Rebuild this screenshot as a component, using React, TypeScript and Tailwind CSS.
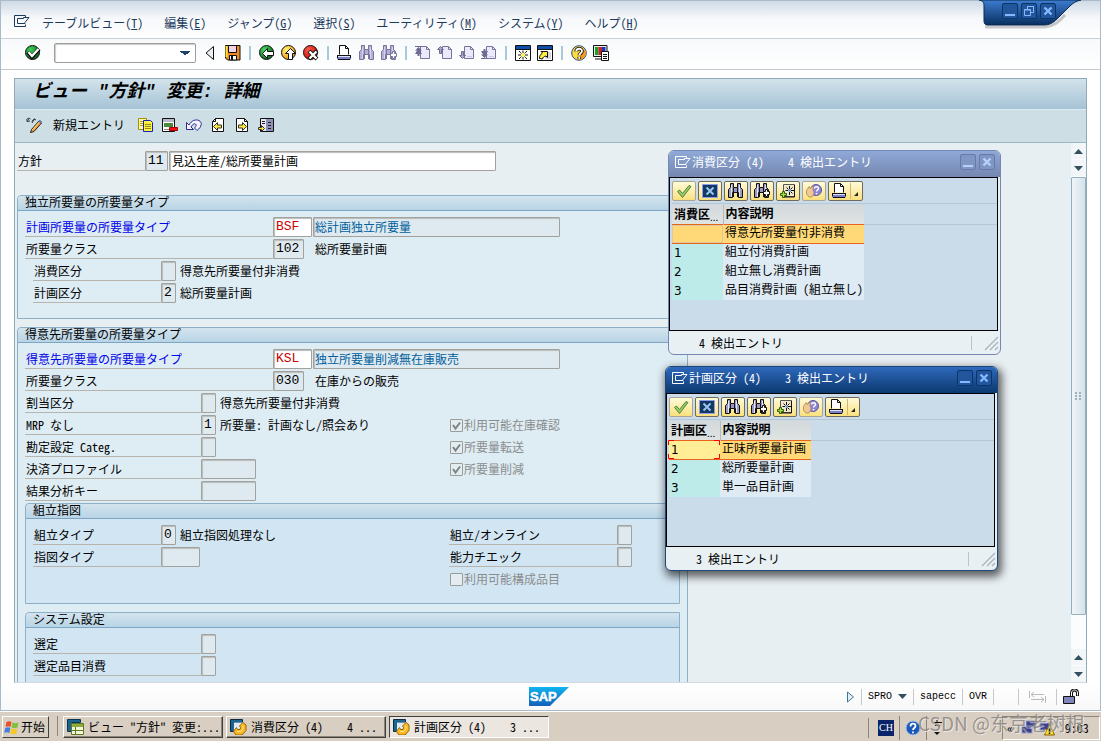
import React from "react";

type Kids = { children?: React.ReactNode };

/* ---------- icons ---------- */

function Icon({ children, w = 16, h = 16 }: Kids & { w?: number; h?: number }) {
  return (
    <svg width={w} height={h} viewBox={`0 0 ${w} ${h}`} fill="none" aria-hidden="true" className="block shrink-0">
      {children}
    </svg>
  );
}

const SessionIcon = () => (
  <Icon w={17} h={13}>
    <path d="M11.5 2.500V.500H.500v11h11v-2" stroke="currentColor" />
    <path d="M3.500 8.500v-5h6v-1h5.500l-4 5v1z" stroke="currentColor" />
  </Icon>
);

const Orb = ({ id, a, b, children }: Kids & { id: string; a: string; b: string }) => (
  <Icon>
    <defs>
      <radialGradient id={id} cx="0.35" cy="0.3" r="0.8">
        <stop offset="0" stopColor={a} />
        <stop offset="1" stopColor={b} />
      </radialGradient>
    </defs>
    <circle cx="7.500" cy="7.500" r="7" fill={`url(#${id})`} stroke="#111" />
    {children}
  </Icon>
);

const OkIcon = () => (
  <Orb id="ok" a="#3fd05a" b="#04581c">
    <path d="M3 7l4 5 7-8" stroke="#111" strokeWidth="4" />
    <path d="M3.500 7l3.500 4 6.500-7" stroke="#fff" strokeWidth="2.200" />
  </Orb>
);
const BackIcon = () => (
  <Orb id="bk" a="#4bd865" b="#04581c">
    <path d="M3.500 8.500l5-5v3h6v4h-6v3z" fill="#fff" stroke="#111" />
  </Orb>
);
const ExitIcon = () => (
  <Orb id="ex" a="#fff27a" b="#f08a00">
    <path d="M9.500 3.500l5 5h-3v6h-4v-6h-3z" fill="#fff" stroke="#111" />
  </Orb>
);
const CancelIcon = () => (
  <Orb id="cn" a="#ff5a4a" b="#c00000">
    <path d="M6 6l8 8M14 6l-8 8" stroke="#111" strokeWidth="4" />
    <path d="M6.500 6.500l7 7M13.500 6.500l-7 7" stroke="#fff" strokeWidth="2.400" />
  </Orb>
);
const HelpIcon = () => (
  <Icon>
    <circle cx="8" cy="8" r="7.300" fill="#ffdc3c" stroke="#2a4a8a" />
    <path d="M8 14.800A6.800 6.800 0 0 0 13.500 4L10 9z" fill="#f79a1c" />
    <path d="M5.200 6.500C5.200 2.800 11 3 11 6c0 2.300-2.700 2.300-2.700 4.300M8.300 11.800v2" stroke="#111" strokeWidth="3.600" />
    <path d="M5.200 6.500C5.200 2.800 11 3 11 6c0 2.300-2.700 2.300-2.700 4.300M8.300 11.800v2" stroke="#fff" strokeWidth="1.800" />
  </Icon>
);
const SaveIcon = () => (
  <Icon>
    <path d="M.5.5h14.500v14.500H2.500l-2-2z" fill="#f08a28" stroke="#111" />
    <path d="M1.500 1v11" stroke="#ffe23c" strokeWidth="2" />
    <path d="M3.500.5h8v7h-8z" fill="#f3d3e6" stroke="#111" />
    <path d="M4.500 10.500h7v4.500h-7z" fill="#fff" stroke="#111" />
    <path d="M6 11h2v4H6z" fill="#111" />
  </Icon>
);
const PrinterIcon = () => (
  <Icon>
    <path d="M2.500 9.500v-9h6l3 3v6" fill="#fff" stroke="#111" />
    <path d="M8.500.5v3h3" stroke="#111" />
    <path d="M.5 10h13v4.500H.5z" fill="#7c80c8" />
    <path d="M.5 10.500v3M13.500 10.500v3M0 10.500h14M1 14.500h12" stroke="#111" />
    <path d="M1 11.500h12" stroke="#dfe0ff" />
  </Icon>
);
const Binoculars = ({ plus, dim }: { plus?: boolean; dim?: boolean }) => {
  const s = dim ? "#77759a" : "#111";
  const f = dim ? "#b3b0d6" : "#9a9ac4";
  return (
    <Icon>
      <path d="M2.500.5h3v4h4v-4h3v4l2 2v8h-4v-5h-6v5h-4v-8l2-2z" fill={f} stroke={s} />
      <path d="M3.500 2v12M11.500 2v12" stroke={dim ? "#d4d2ee" : "#e4e4fa"} />
      <path d="M5.500 5v9M9.500 5v9" stroke={s} />
      {plus && <path d="M9.500 8.500h2v-2h2v2h2v3h-2v2h-2v-2h-2z" fill="#fff" stroke={s} />}
    </Icon>
  );
};
const PageNav = ({ kind }: { kind: "first" | "prev" | "next" | "last" }) => {
  const fromTop = kind === "first" || kind === "prev";
  return (
    <Icon>
      <path d="M5.500 1.500h6l3 3v9h-9z" fill="#ebe9fb" stroke="#77759a" />
      <path d="M11.500 1.500v3h3" stroke="#77759a" />
      {kind === "first" && <path d="M0 1h7v1H0zM3.500 2L7 5.500H5L7 9H4.500v2h-2V9H0l2-3.500H0z" fill="#6d6b92" />}
      {kind === "last" && <path d="M0 14h7v-1H0zM3.500 13L7 9.500H5L7 6H4.500V4h-2v2H0l2 3.500H0z" fill="#6d6b92" />}
      {kind === "prev" && <path d="M3.500 1.500l-3 3h2v4h2v-4h2z" fill="#a9a7cc" stroke="#6d6b92" />}
      {kind === "next" && <path d="M3.500 13.500l-3-3h2v-4h2v4h2z" fill="#a9a7cc" stroke="#6d6b92" />}
      {!fromTop && <path d="M8 11.500h5" stroke="#c9c7e4" />}
    </Icon>
  );
};
const NewSession = () => (
  <Icon>
    <path d="M.5.5h15v15H.5z" fill="#fff" stroke="#111" />
    <path d="M1 1h14v3H1z" fill="#0d4fa8" />
    <path d="M1 4.500h14" stroke="#111" />
    <path d="M6.500 8.500h3v3h-3z" fill="#fff23c" />
    <path d="M8 5.500v2.500M8 12v2.500M3 10h3M10 10h3M4 6l2.500 2.500M12 6L9.500 8.500M4 14l2.500-2.500M12 14l-2.500-2.500" stroke="#111" />
    <path d="M5 7.500l1 1M11 7.500l-1 1M5 12.500l1-1M11 12.500l-1-1" stroke="#e8dc20" />
  </Icon>
);
const Shortcut = () => (
  <Icon>
    <path d="M.5.5h15v15H.5z" fill="#fff" stroke="#111" />
    <path d="M1 1h14v3H1z" fill="#0d4fa8" />
    <path d="M1 4.500h14" stroke="#111" />
    <path d="M8 7h6v7H8z" fill="#d8d8e4" />
    <path d="M2.500 13.500c0-3 1-4 3-5.500L4 6.500h6.500v6L9 11c-2 .5-3 1-3.500 3z" fill="#fff23c" stroke="#111" />
  </Icon>
);
const LayoutIcon = () => (
  <Icon>
    <path d="M.5.5h13.500v11H.5zM2 14h7" fill="#ececec" stroke="#111" />
    <path d="M2 2h3.500v8H2z" fill="#18a030" />
    <path d="M5.500 2H9v8H5.500z" fill="#d02020" />
    <path d="M9 2h3.500v8H9z" fill="#1838c0" />
    <path d="M8.500 6.500h7v9h-7z" fill="#fff" stroke="#111" />
    <path d="M10 9.500h4M10 11.500h4M10 13.500h4" stroke="#111" />
  </Icon>
);

const PencilGlasses = () => (
  <Icon>
    <path d="M.5 3.500C.5 1.500 3 .5 4.500 2M3 1.500L1 4.500l3-.5M6 4.500c.5-2 3-2.500 4-1.500M8.500 1.500L6 6" stroke="#333" />
    <path d="M5.500 12.500l7.500-8.500 2.500 2L8 14.500l-3.500 1z" fill="#f5a040" stroke="#222" />
    <path d="M6.500 12.500l6.500-7" stroke="#ffd890" />
    <path d="M13 3.500l2.500 2" stroke="#5b7ab0" strokeWidth="2" />
  </Icon>
);
const CopyIcon = () => (
  <Icon>
    <path d="M.5 1.500h8v11h-8z" fill="#fff8b0" stroke="#a09000" />
    <path d="M2 4.500h5M2 6.500h5M2 8.500h5" stroke="#b0a000" />
    <path d="M5.500 3.500h7l2 2v9h-9z" fill="#fff23c" stroke="#1720b8" />
    <path d="M7 7.500h6M7 9.500h6M7 11.500h6" stroke="#8f8a20" />
  </Icon>
);
const DeleteRow = () => (
  <Icon>
    <path d="M.5 1.500h12v13H.5z" fill="#fff" stroke="#111" />
    <path d="M1 2h11v3H1z" fill="#b8b8c8" />
    <path d="M2 6h9v4H2z" fill="#4a8a3a" />
    <path d="M2 12.500h5" stroke="#888" />
    <path d="M7.500 10.500h8v3h-8z" fill="#f01010" stroke="#a00" />
  </Icon>
);
const UndoIcon = () => (
  <Icon>
    <path d="M.5 5.500v7h7L5 10c1.500-3 4-4 5-2.500.5 1.500-.5 2.500-1.500 3.500l2.500 2.500c5-4 5.500-8 2-10C9.500 2 5.500 3.500 3 8z" fill="#f4f4ff" stroke="#2c2c90" />
  </Icon>
);
const PageArrow = ({ back }: { back?: boolean }) => (
  <Icon>
    <path d={back ? "M5.500 1.500h8v13h-11v-10z" : "M2.500 1.500h8l3 3v10h-11z"} fill="#fff" stroke="#111" />
    <path d={back ? "M5.500 1.500v3h-3" : "M10.500 1.500v3h3"} stroke="#111" />
    {back ? (
      <path d="M3.500 9.500l4-4v2.500h4v3h-4v2.500z" fill="#ffe83c" stroke="#333" />
    ) : (
      <path d="M12.500 9.500l-4-4v2.500h-4v3h4v2.500z" fill="#ffe83c" stroke="#333" />
    )}
  </Icon>
);
const OtherEntry = () => (
  <Icon>
    <path d="M2.500 1.500h13v13h-13z" fill="#e8e8f4" stroke="#111" />
    <path d="M8 2h7v12H8z" fill="#8f90b8" />
    <path d="M4 4.500h3M4 6.500h3M10 5.500h3M10 8.500h3M10 11.500h3" stroke="#222" />
    <path d="M6.500 11.500l-3-3v2h-3v2h3v2z" fill="#ffe83c" stroke="#333" />
  </Icon>
);

const GreenCheck = () => (
  <Icon>
    <path d="M1.500 8.500l2-1.500 3 3.500L13 2.500l2 1-8.500 11z" fill="#93cf62" stroke="#55803c" />
  </Icon>
);
const BlueX = () => (
  <Icon>
    <path d="M.5 1.500h15v13H.5z" fill="#12395f" stroke="#8f9bf0" />
    <path d="M4.500 4.500l7 7M11.500 4.500l-7 7" stroke="#9cc4f4" strokeWidth="2" />
  </Icon>
);
const Personal = () => (
  <Icon>
    <path d="M3.500 1.500h11v12h-11z" fill="#f0e8c8" stroke="#555" />
    <path d="M14.500 2v12H4" stroke="#111" />
    <path d="M9.500 3v3M9.500 9v3M5.500 7.500H8M11 7.500h3M6.500 4.500L8.500 6.500M12.500 4.500L10.500 6.500M12.500 10.500L10.500 8.500" stroke="#111" />
    <path d="M8.500 6.500h2v2h-2z" fill="#4a8cf0" />
    <path d="M.5 10.500h2v-2h2v2h2v2h-2v2h-2v-2h-2z" fill="#a4e040" stroke="#2f5a10" />
  </Icon>
);
const HandHelp = () => (
  <Icon>
    <circle cx="10" cy="7" r="5.500" fill="#8c84d8" stroke="#5a54a0" />
    <path d="M8.500 5.500c0-2.500 4-2.500 4 0 0 1.500-2 1.500-2 3M10.500 10v1.500" stroke="#fff" strokeWidth="1.500" />
    <path d="M.5 7.500l2.500-4 1 2 3-2.500v4l1 3-2 4H3L.5 11z" fill="#f0c898" stroke="#b08850" strokeWidth=".8" />
  </Icon>
);

const Flag = () => (
  <Icon w={17}>
    <path d="M2.500 3C4.500 2 6 2 7.500 3L6.500 8C5 7 3.500 7 1.500 8z" fill="#e8502c" />
    <path d="M8.500 3.400c2 1 3.500 1 6 0l-1 5c-2 1-4 1-6 0z" fill="#7fc03c" />
    <path d="M1.300 9c2-1 3.500-1 5 0l-1 5c-1.500-1-3-1-5 0z" fill="#3f7fe0" />
    <path d="M7.300 9.400c2 1 4 1 6 0l-1 5c-2 1-4 1-6 0z" fill="#f8c820" />
  </Icon>
);
const TableTask = () => (
  <Icon w={17}>
    <path d="M.5.5h13v3h-9v9h-4z" fill="#1a6490" stroke="#0c3450" />
    <path d="M4.500 4.500h12v11h-12z" fill="#f4f6d8" stroke="#5d7a20" />
    <path d="M5 5h11v3H5z" fill="#8faa3c" />
    <path d="M5 11.500h11M8.500 8v7" stroke="#5d7a20" />
  </Icon>
);
const DialogTask = () => (
  <Icon w={17}>
    <path d="M.5.5h12v3h-8v9h-4z" fill="#1a6490" stroke="#0c2a48" />
    <path d="M4 3.500h9v9H4z" fill="#dfeaf4" />
    <path d="M3.500 12.500l3-4 1 2h2.500l.5-2-1-1.500 3.500-3.500 3 2.500v5.500l-4 4.500h-6z" fill="#f9b820" stroke="#9a6400" />
    <path d="M7 12.500h4l2-3V6.500" stroke="#ffe890" />
  </Icon>
);

/* ---------- shared pieces ---------- */

const fieldBase =
  "h-5 min-w-0 rounded-[1px] border border-[#a3a19c] pb-0.5 shadow-[inset_1px_1px_1px_#b9bcbc] outline-none";

function Field(p: { id?: string; name: string; value?: string; cls: string }) {
  return (
    <input id={p.id} aria-label={p.id ? undefined : p.name} readOnly defaultValue={p.value ?? ""} className={`${fieldBase} ${p.cls}`} />
  );
}

const mono = "font-['Liberation_Mono','Noto_Sans_CJK_JP',monospace] text-[13px]";

function Row(p: {
  id: string;
  label: string;
  labelCls: string;
  fieldCls: string;
  value?: string;
  blue?: boolean;
  children?: React.ReactNode;
}) {
  return (
    <div className="mb-0.5 flex h-5">
      <label
        htmlFor={p.id}
        className={`flex shrink-0 items-center border-b border-[#b7b4ae] pl-px ${p.labelCls} ${p.blue ? "text-[#0000e8]" : ""}`}
      >
        {p.label}
      </label>
      <Field id={p.id} name={p.label} value={p.value} cls={`shrink-0 ${mono} ${p.fieldCls}`} />
      {p.children}
    </div>
  );
}

const Note = ({ children }: Kids) => <span className="self-center pl-1">{children}</span>;

function Check({ label, checked }: { label: string; checked?: boolean }) {
  return (
    <label className="flex h-5 items-center gap-px text-[#8a8d8e]">
      <span className="grid">
        <input
          type="checkbox"
          disabled
          defaultChecked={checked}
          className="col-start-1 row-start-1 size-[13px] appearance-none rounded-[1px] border border-[#9b9b98] bg-[#e3edf1]"
        />
        {checked && (
          <svg viewBox="0 0 13 13" className="col-start-1 row-start-1 size-[13px]" fill="none" aria-hidden="true">
            <path d="M3 6l2.500 3.500L10 3.500" stroke="#7e8486" strokeWidth="2" />
          </svg>
        )}
      </span>
      {label}
    </label>
  );
}

function Group({ title, inner, children }: Kids & { title: string; inner?: boolean }) {
  return (
    <section
      className={`mb-2 min-w-0 rounded-tl-[4px] border border-[#8bb0c8] ${inner ? "bg-[#d2e5f2]" : "bg-[#deecf3]"}`}
    >
      <h2 className="h-[15px] rounded-tl-[4px] border-b border-[#7fa5c4] bg-gradient-to-b from-[#d3e4ee] to-[#b8d4e5] pl-[7px] leading-3">
        {title}
      </h2>
      <div className={`px-[7px] pt-1.5 ${inner ? "pb-3" : ""}`}>{children}</div>
    </section>
  );
}

const Sep = () => <span className="mx-2 h-3.5 w-0.5 shrink-0 bg-[#a9c8da]" />;

function ToolBtn({ name, children }: Kids & { name: string }) {
  return (
    <button type="button" aria-label={name} className="block shrink-0">
      {children}
    </button>
  );
}

/* ---------- dialog ---------- */

type Entry = [string, string];

function WinBtn({ name, active, children }: Kids & { name: string; active?: boolean }) {
  return (
    <button
      type="button"
      aria-label={name}
      className={`grid size-4 place-items-center rounded-[2px] border ${
        active ? "border-[#0b3468] bg-[#22569c] text-[#86b8ff]" : "border-[#677aa6] bg-[#8097c6] text-[#b6d2fb]"
      }`}
    >
      {children}
    </button>
  );
}
const MinGlyph = () => (
  <Icon w={12} h={12}>
    <path d="M1 10h10" stroke="currentColor" strokeWidth="2" />
  </Icon>
);
const CloseGlyph = () => (
  <Icon w={12} h={12}>
    <path d="M2.500 2.500l7 7M9.500 2.500l-7 7" stroke="currentColor" strokeWidth="2.400" />
  </Icon>
);

function DialogBtn({ name, dim, children }: Kids & { name: string; dim?: boolean }) {
  return (
    <button
      type="button"
      aria-label={name}
      className={`flex h-5 items-center justify-center rounded-[2px] border bg-gradient-to-b from-[#fffbd8] to-[#fbe07a] px-[3px] ${
        dim ? "border-[#a8a496]" : "border-[#6e6a60]"
      }`}
    >
      {children}
    </button>
  );
}

function Dialog(p: { title: string; count: number; col: string; rows: Entry[]; active?: boolean; place: string; textCol: string }) {
  return (
    <section
      aria-label={p.title}
      className={`absolute flex h-[205px] w-[333px] flex-col rounded-[6px] border bg-[#e8f0f4] ${p.place} ${
        p.active ? "border-[#1d4779] shadow-[2px_4px_8px_2px_rgba(0,0,0,0.6)]" : "border-[#7787b4]"
      }`}
    >
      <header
        className={`flex h-[26px] items-center rounded-t-[5px] pr-[5px] pb-1 pl-1.5 text-white ${
          p.active ? "bg-gradient-to-b from-[#2f69bd] to-[#0b3a70]" : "bg-gradient-to-b from-[#8fa9d8] to-[#7587b0]"
        }`}
      >
        <SessionIcon />
        <h2 className="flex-1 whitespace-pre">{`${p.title} (4)    ${p.count} 検出エントリ`}</h2>
        <div className="flex gap-[3px]">
          <WinBtn name="最小化" active={p.active}>
            <MinGlyph />
          </WinBtn>
          <WinBtn name="閉じる" active={p.active}>
            <CloseGlyph />
          </WinBtn>
        </div>
      </header>
      <div className="mr-0.5 flex-1 border border-black bg-[#cadce9] pt-[3px] pl-0.5">
        <div className="flex gap-0.5 border-b border-[#b9c6d0] pb-0.5">
          <DialogBtn name="選択" dim>
            <GreenCheck />
          </DialogBtn>
          <DialogBtn name="取消">
            <BlueX />
          </DialogBtn>
          <DialogBtn name="検索">
            <Binoculars />
          </DialogBtn>
          <DialogBtn name="次検索">
            <Binoculars plus />
          </DialogBtn>
          <DialogBtn name="個人値一覧に追加">
            <Personal />
          </DialogBtn>
          <DialogBtn name="ヘルプ" dim>
            <HandHelp />
          </DialogBtn>
          <DialogBtn name="印刷">
            <PrinterIcon />
            <Icon w={11}>
              <path d="M2.500 0v16" stroke="#c8b878" />
              <path d="M10 9v4H6z" fill="#222" />
            </Icon>
          </DialogBtn>
        </div>
        <div className="border-b border-[#b9c6d0] border-t border-t-transparent h-[21px] -mb-5" />
        <table className="table-fixed border-collapse">
          <thead>
            <tr className="h-[19px] bg-gradient-to-b from-[#d3d9dc] to-[#dfe3e2] text-left leading-none">
              <th className="w-[51px] border-r border-[#b5bcc0] p-0 pl-0.5 font-bold">
                <span className="flex items-end">
                  {p.col}
                  <span className="text-[10px] leading-[6px] font-normal [font-feature-settings:normal]">...</span>
                </span>
              </th>
              <th className={`p-0 pb-0.5 pl-0.5 font-bold ${p.textCol}`}>内容説明</th>
            </tr>
          </thead>
          <tbody>
            {p.rows.map(([k, t], i) => (
              <tr key={t} className={`h-[19px] leading-none ${i === 0 ? "bg-[#ffd978]" : "bg-[#deeaf4]"}`}>
                <td
                  className={`relative p-0 pl-0.5 font-['DejaVu_Sans',sans-serif] text-[12px] ${
                    i === 0
                      ? p.active
                        ? "border-y border-[#e8641c] bg-[#ffee96]"
                        : "border-y border-[#e8641c] shadow-[inset_0_0_0_1px_#dcc89c]"
                      : "bg-[#bdebea]"
                  }`}
                >
                  {k}
                  {i === 0 && p.active && (
                    <svg
                      width="52"
                      height="19"
                      viewBox="0 0 52 19"
                      fill="none"
                      aria-hidden="true"
                      className="absolute top-[-1px] left-[-1px]"
                    >
                      <path d="M6 .5H.5V5M46 .5h5.500V5M6 18.500H.5V14M46 18.500h5.500V14" stroke="#f00" />
                    </svg>
                  )}
                </td>
                <td className={`p-0 pb-[3px] pl-0.5 whitespace-nowrap ${i === 0 ? "border-y border-[#e8641c]" : ""}`}>{t}</td>
              </tr>
            ))}
          </tbody>
        </table>
      </div>
      <footer className="flex h-[23px] items-center justify-end">
        <span className="flex-1 pl-[30px]">{`${p.count} 検出エントリ`}</span>
        <span className="mr-3 h-3.5 w-px bg-[#bcc4c8]" />
        <svg width="16" height="16" viewBox="0 0 16 16" fill="none" aria-hidden="true">
          <path d="M1 15L14 2M6 15l8-8M11 15l3-3" stroke="#a9b2b8" strokeWidth="1.200" />
        </svg>
      </footer>
    </section>
  );
}

/* ---------- page ---------- */

const menus: [string, string][] = [
  ["テーブルビュー", "T"],
  ["編集", "E"],
  ["ジャンプ", "G"],
  ["選択", "S"],
  ["ユーティリティ", "M"],
  ["システム", "Y"],
  ["ヘルプ", "H"],
];

const Up = () => (
  <Icon w={9} h={5}>
    <path d="M0 5L4.500 0 9 5z" fill="#33505f" />
  </Icon>
);
const Down = () => (
  <Icon w={9} h={5}>
    <path d="M0 0h9L4.500 5z" fill="#33505f" />
  </Icon>
);

function ScrollBtn({ name, children }: Kids & { name: string }) {
  return (
    <button type="button" aria-label={name} className="grid h-4 shrink-0 place-items-center bg-[#f3f6f9]">
      {children}
    </button>
  );
}

const StatusSep = () => <span className="h-4 w-px bg-[#c5c9cd]" />;

function Task({ pressed, children }: Kids & { pressed?: boolean }) {
  return (
    <button
      type="button"
      className={`flex h-[22px] w-40 items-center gap-1 overflow-hidden border pl-[3px] whitespace-pre ${
        pressed
          ? "border-t-[#404040] border-r-white border-b-white border-l-[#404040] bg-[#ebe6e0]"
          : "border-t-white border-r-[#404040] border-b-[#404040] border-l-white bg-[#d8cec2] shadow-[inset_-1px_-1px_0_#8c857c]"
      }`}
    >
      {children}
    </button>
  );
}

export default function App() {
  return (
    <div className="relative flex h-screen min-w-[1000px] flex-col overflow-hidden bg-[#d8cec2] font-['Noto_Sans_CJK_JP','Liberation_Sans',sans-serif] text-[12px] leading-4 text-black [font-feature-settings:'hwid']">
      <div className="flex min-h-0 flex-1 flex-col border border-[#a9bac8] bg-white">
        <nav className="flex h-[38px] shrink-0 items-center border-b border-[#c9d0d8] bg-gradient-to-b from-[#cfdae6] via-[#f5f7fa] via-45% to-white pt-[7px] pl-[13px] text-[#1c3a5c]">
          <button type="button" aria-label="メニュー" className="mr-[11px] pb-[3px]">
            <SessionIcon />
          </button>
          <div className="flex gap-[21px]">
            {menus.map(([t, k]) => (
              <button key={t} type="button" className="flex">
                {t}
                <span className="w-[18px] text-center">
                  (<u>{k}</u>)
                </span>
              </button>
            ))}
          </div>
        </nav>

        <div className="flex h-[31px] shrink-0 items-center border-b border-[#c3c9d0] bg-gradient-to-b from-[#f7f9fb] to-white pb-0.5 pl-6">
          <ToolBtn name="Enter">
            <OkIcon />
          </ToolBtn>
          <select
            aria-label="コマンド"
            className="mr-[9px] ml-[13px] h-5 w-[142px] appearance-none rounded-[2px] border border-[#9c9c98] bg-white bg-[linear-gradient(to_bottom_right,#20406a_50%,transparent_50%),linear-gradient(to_bottom_left,#20406a_50%,transparent_50%)] bg-[size:5px_5px,5px_5px] bg-[position:130px_7px,125px_7px] bg-no-repeat shadow-[inset_1px_1px_1px_#ccc]"
          >
            <option></option>
          </select>
          <ToolBtn name="入力欄を閉じる">
            <Icon w={10}>
              <path d="M8.500 1.500v13L1 8z" fill="#eee" stroke="#111" />
            </Icon>
          </ToolBtn>
          <span className="w-2.5" />
          <ToolBtn name="保存">
            <SaveIcon />
          </ToolBtn>
          <Sep />
          <div className="flex gap-1.5">
            <ToolBtn name="戻る">
              <BackIcon />
            </ToolBtn>
            <ToolBtn name="終了">
              <ExitIcon />
            </ToolBtn>
            <ToolBtn name="取消">
              <CancelIcon />
            </ToolBtn>
          </div>
          <Sep />
          <div className="flex gap-1.5">
            <ToolBtn name="印刷">
              <PrinterIcon />
            </ToolBtn>
            <ToolBtn name="検索">
              <Binoculars dim />
            </ToolBtn>
            <ToolBtn name="次検索">
              <Binoculars dim plus />
            </ToolBtn>
          </div>
          <Sep />
          <div className="flex gap-1.5">
            <ToolBtn name="先頭ページ">
              <PageNav kind="first" />
            </ToolBtn>
            <ToolBtn name="前ページ">
              <PageNav kind="prev" />
            </ToolBtn>
            <ToolBtn name="次ページ">
              <PageNav kind="next" />
            </ToolBtn>
            <ToolBtn name="最終ページ">
              <PageNav kind="last" />
            </ToolBtn>
          </div>
          <Sep />
          <div className="flex gap-1.5">
            <ToolBtn name="新規セッション">
              <NewSession />
            </ToolBtn>
            <ToolBtn name="ショートカット">
              <Shortcut />
            </ToolBtn>
          </div>
          <Sep />
          <div className="flex gap-1.5">
            <ToolBtn name="ヘルプ">
              <HelpIcon />
            </ToolBtn>
            <ToolBtn name="レイアウト">
              <LayoutIcon />
            </ToolBtn>
          </div>
        </div>

        <main className="mx-[13px] mt-2 flex min-h-0 flex-1 flex-col border border-[#8fabba] border-b-[#d3dae0] bg-[#e8eff3]">
          <h1 className="flex h-[31px] shrink-0 items-center border-b border-[#dcebf2] bg-gradient-to-b from-[#d3e3eb] to-[#a5c3d6] pb-1 pl-[18px] font-['Liberation_Mono','Noto_Sans_CJK_JP',monospace] text-[18px] leading-none font-bold whitespace-pre italic">
            ビュー "方針" 変更: 詳細
          </h1>
          <div className="flex h-[33px] shrink-0 items-center border-b border-[#9db8c5] bg-[#cddee4] pb-[3px] pl-[11px]">
            <ToolBtn name="表示/変更">
              <PencilGlasses />
            </ToolBtn>
            <button type="button" className="mr-[13px] ml-[11px]">
              新規エントリ
            </button>
            <div className="flex gap-2">
              <ToolBtn name="コピー">
                <CopyIcon />
              </ToolBtn>
              <ToolBtn name="削除">
                <DeleteRow />
              </ToolBtn>
              <ToolBtn name="元に戻す">
                <UndoIcon />
              </ToolBtn>
              <ToolBtn name="前エントリ">
                <PageArrow back />
              </ToolBtn>
              <ToolBtn name="次エントリ">
                <PageArrow />
              </ToolBtn>
              <ToolBtn name="他のエントリ">
                <OtherEntry />
              </ToolBtn>
            </div>
          </div>

          <div className="flex min-h-0 flex-1">
            <div className="min-w-0 flex-1 overflow-hidden pt-2 pl-0.5">
              <div className="mb-6 flex h-5">
                <label htmlFor="policy" className="flex w-32 items-center border-b border-[#b7b4ae] pl-px">
                  方針
                </label>
                <Field id="policy" name="方針" value="11" cls={`w-[23px] bg-[#dfeaf0] pl-0.5 ${mono}`} />
                <Field name="方針名称" value="見込生産/総所要量計画" cls="ml-px w-[327px] bg-white pl-0.5" />
              </div>

              <div className="w-[671px]">
                <Group title="独立所要量の所要量タイプ">
                  <Row id="g1a" label="計画所要量の所要量タイプ" blue labelCls="w-[248px]" value="BSF" fieldCls="w-[39px] bg-white pl-0.5 text-[#c80000]">
                    <Field name="所要量タイプ名称" value="総計画独立所要量" cls="ml-px w-[247px] bg-[#dfeaf0] pl-px text-[#00609c]" />
                  </Row>
                  <Row id="g1b" label="所要量クラス" labelCls="w-[248px]" value="102" fieldCls="w-[31px] bg-[#dfeaf0] pl-0.5">
                    <span className="self-center pl-[11px]">総所要量計画</span>
                  </Row>
                  <div className="pb-[13px] pl-2">
                    <Row id="g1c" label="消費区分" labelCls="w-32" fieldCls="w-[15px] bg-[#dfeaf0]">
                      <Note>得意先所要量付非消費</Note>
                    </Row>
                    <Row id="g1d" label="計画区分" labelCls="w-32" value="2" fieldCls="w-[15px] bg-[#dfeaf0] pl-0.5">
                      <Note>総所要量計画</Note>
                    </Row>
                  </div>
                </Group>

                <Group title="得意先所要量の所要量タイプ">
                  <Row id="g2a" label="得意先所要量の所要量タイプ" blue labelCls="w-[248px]" value="KSL" fieldCls="w-[39px] bg-white pl-0.5 text-[#c80000]">
                    <Field name="所要量タイプ名称" value="独立所要量削減無在庫販売" cls="ml-px w-[247px] bg-[#dfeaf0] pl-px text-[#00609c]" />
                  </Row>
                  <Row id="g2b" label="所要量クラス" labelCls="w-[248px]" value="030" fieldCls="w-[31px] bg-[#dfeaf0] pl-0.5">
                    <span className="self-center pl-[11px]">在庫からの販売</span>
                  </Row>
                  <Row id="g2c" label="割当区分" labelCls="w-44" fieldCls="w-[15px] bg-[#dfeaf0]">
                    <Note>得意先所要量付非消費</Note>
                  </Row>
                  <div className="flex">
                    <div className="w-[425px]">
                      <Row id="g2d" label="MRP なし" labelCls="w-44" value="1" fieldCls="w-[15px] bg-[#dfeaf0] pl-0.5">
                        <Note>所要量: 計画なし/照会あり</Note>
                      </Row>
                      <Row id="g2e" label="勘定設定 Categ." labelCls="w-44" fieldCls="w-[15px] bg-[#dfeaf0]" />
                      <Row id="g2f" label="決済プロファイル" labelCls="w-44" fieldCls="w-[55px] bg-[#dfeaf0]" />
                      <Row id="g2g" label="結果分析キー" labelCls="w-44" fieldCls="w-[55px] bg-[#dfeaf0]" />
                    </div>
                    <div className="flex flex-col gap-0.5">
                      <Check label="利用可能在庫確認" checked />
                      <Check label="所要量転送" checked />
                      <Check label="所要量削減" checked />
                    </div>
                  </div>

                  <Group title="組立指図" inner>
                    <div className="flex">
                      <div className="w-[416px]">
                        <Row id="g3a" label="組立タイプ" labelCls="w-32" value="0" fieldCls="w-[15px] bg-[#dfeaf0] pl-0.5">
                          <Note>組立指図処理なし</Note>
                        </Row>
                        <Row id="g3b" label="指図タイプ" labelCls="w-32" fieldCls="w-[39px] bg-[#dfeaf0]" />
                      </div>
                      <div>
                        <Row id="g3c" label="組立/オンライン" labelCls="w-[168px]" fieldCls="w-[15px] bg-[#dfeaf0]" />
                        <Row id="g3d" label="能力チエック" labelCls="w-[168px]" fieldCls="w-[15px] bg-[#dfeaf0]" />
                        <div className="pb-0.5 pl-px">
                          <Check label="利用可能構成品目" />
                        </div>
                      </div>
                    </div>
                  </Group>

                  <Group title="システム設定" inner>
                    <Row id="g4a" label="選定" labelCls="w-[168px]" fieldCls="w-[15px] bg-[#dfeaf0]" />
                    <Row id="g4b" label="選定品目消費" labelCls="w-[168px]" fieldCls="w-[15px] bg-[#dfeaf0]" />
                  </Group>
                </Group>
              </div>
            </div>

            <div className="flex w-[15px] shrink-0 flex-col gap-px bg-[#fbfcfd]">
              <ScrollBtn name="上へ">
                <Up />
              </ScrollBtn>
              <ScrollBtn name="下へ">
                <Down />
              </ScrollBtn>
              <div className="flex-1">
                <div className="grid h-[93%] place-items-center rounded-[1px] border border-[#93b0c0] bg-gradient-to-r from-[#f0f5f8] to-[#d5e2ea]">
                  <svg width="7" height="8" viewBox="0 0 7 8" aria-hidden="true">
                    <path d="M0 0h2v2H0zM4 0h2v2H4zM0 3h2v2H0zM4 3h2v2H4zM0 6h2v2H0zM4 6h2v2H4z" fill="#9fb2bf" />
                  </svg>
                </div>
              </div>
              <ScrollBtn name="上へスクロール">
                <Up />
              </ScrollBtn>
              <ScrollBtn name="下へスクロール">
                <Down />
              </ScrollBtn>
            </div>
          </div>
        </main>

        <footer className="grid h-[27px] shrink-0 grid-cols-[1fr_auto_1fr] items-center bg-gradient-to-b from-white to-[#f8f8f8] pr-[3px]">
          <span />
          <svg width="40" height="19" viewBox="0 0 40 19" role="img" aria-label="SAP">
            <defs>
              <linearGradient id="sap" x1="0" y1="0" x2="0" y2="1">
                <stop offset="0" stopColor="#0fb4ee" />
                <stop offset="1" stopColor="#1460b8" />
              </linearGradient>
            </defs>
            <path d="M0 0h40L21 19H0z" fill="url(#sap)" />
            <text x="1" y="14" fontSize="13" fontWeight="bold" fontFamily="Liberation Sans" fill="#fff" stroke="#fff" strokeWidth=".5">
              SAP
            </text>
          </svg>
          <div className="flex items-center justify-end gap-1.5 pr-[17px] font-['Liberation_Mono',monospace] text-[10px]">
            <Icon w={9} h={12}>
              <path d="M1.500 1v10l6-5z" fill="#e4f0f8" stroke="#3c7896" />
            </Icon>
            <StatusSep />
            <span>SPRO</span>
            <Down />
            <StatusSep />
            <span>sapecc</span>
            <StatusSep />
            <span>OVR</span>
            <StatusSep />
            <span className="w-3" />
            <StatusSep />
            <span className="px-1">
              <Icon w={17} h={12}>
                <path d="M.5 0v7M2 3.500h13M5 1L2 3.500 5 6M16.500 5v7M2 8.500h13M12 6l3 2.500-3 2.500" stroke="#b9bcbe" />
              </Icon>
            </span>
            <StatusSep />
            <Icon w={17}>
              <path d="M.5 7.500h11v7H.5z" fill="#7f86bc" stroke="#111" />
              <path d="M8.500 7V4c0-4 6-4 6 0v3" stroke="#111" strokeWidth="3" />
              <path d="M8.500 7V4c0-4 6-4 6 0v2.500" stroke="#fff" />
            </Icon>
          </div>
        </footer>
      </div>

      <div className="flex h-[30px] shrink-0 items-start border-t border-white pt-1 pl-0.5">
        <button
          type="button"
          className="mr-2 flex h-[22px] w-[47px] items-center border border-t-white border-r-[#404040] border-b-[#404040] border-l-white pl-px font-['Noto_Sans_CJK_SC','Noto_Sans_CJK_JP',sans-serif]"
        >
          <Flag />
          开始
        </button>
        <span className="mr-[5px] h-5 w-px bg-[#8c857c]" />
        <div className="flex gap-[3px]">
          <Task>
            <TableTask />
            <span>ビュー "方針" 変更:...</span>
          </Task>
          <Task>
            <DialogTask />
            <span>{"消費区分 (4)    4 ..."}</span>
          </Task>
          <Task pressed>
            <DialogTask />
            <span>{"計画区分 (4)    3 ..."}</span>
          </Task>
        </div>
        <div className="ml-auto flex h-6 items-center gap-[5px] pr-px">
          <span className="h-5 w-px bg-[#8c857c]" />
          <span className="ml-1 grid size-4 place-items-center bg-[#0a246a] font-['Liberation_Serif',serif] text-[10px] leading-none text-white">
            CH
          </span>
          <span className="h-6 w-px bg-[#8c857c]" />
          <Icon>
            <circle cx="8" cy="8" r="7" fill="#1c58b8" stroke="#a8c4ec" />
            <path d="M5.500 6.500c0-4 5-3.500 5-.500 0 2-2.500 2-2.500 4M8 11.500v1.800" stroke="#fff" strokeWidth="1.800" />
          </Icon>
          <span className="h-6 w-px bg-[#8c857c]" />
          <Icon>
            <path d="M2 2.500h8M3 5.500h5l-1 2M5 0v3" stroke="#111" />
            <path d="M2 12h6l-3 3z" fill="#111" />
          </Icon>
          <span className="w-11" />
          <div className="flex h-6 w-[98px] items-center gap-0.5 border border-t-[#8c857c] border-r-white border-b-white border-l-[#8c857c] pl-1">
            <span className="pr-1.5">«</span>
            <Icon>
              <path d="M5 1h10v7H5zM1 6h10v7H1z" fill="#3a3f90" stroke="#9a9ec8" />
            </Icon>
            <Icon>
              <path d="M1 3h9v7H1z" fill="#3a3f90" stroke="#9a9ec8" />
              <path d="M10.500 4l5 11h-10z" fill="#ffe020" stroke="#806000" />
              <path d="M10.500 8v3.500M10.500 12.500v1.500" stroke="#111" strokeWidth="1.500" />
            </Icon>
            <time className="pl-2">9:03</time>
          </div>
        </div>
      </div>

      <div className="absolute top-0 right-[18px]">
        <svg width="104" height="30" viewBox="0 0 104 30" fill="none" aria-hidden="true" className="block">
          <defs>
            <linearGradient id="cap" x1="0" y1="0" x2="0" y2="1">
              <stop offset="0" stopColor="#3c7cd0" />
              <stop offset="1" stopColor="#083060" />
            </linearGradient>
          </defs>
          <path d="M6 27h60c10-1 14-6 20-12" stroke="#000" strokeOpacity=".2" strokeWidth="3" />
          <path d="M0 0c4 1 5 2 5 6v14c0 4 1 5 4 5h56c5 0 9-2 13-6l13-13c3-3 6-5 11-6z" fill="url(#cap)" stroke="#0a2850" />
        </svg>
        <div className="absolute top-[3px] left-[23px] flex gap-[3px]">
          <WinBtn name="最小化" active>
            <MinGlyph />
          </WinBtn>
          <WinBtn name="元のサイズに戻す" active>
            <Icon w={12} h={12}>
              <path d="M4.500 4V1.500h6v6H8M4 1.500h7" stroke="currentColor" />
              <path d="M1.500 4.500h6v6h-6zM1 5h7" stroke="currentColor" />
            </Icon>
          </WinBtn>
          <WinBtn name="閉じる" active>
            <CloseGlyph />
          </WinBtn>
        </div>
      </div>

      <Dialog
        title="消費区分"
        col="消費区"
        count={4}
        place="top-[150px] left-[668px]"
        textCol="w-[141px]"
        rows={[
          ["", "得意先所要量付非消費"],
          ["1", "組立付消費計画"],
          ["2", "組立無し消費計画"],
          ["3", "品目消費計画 (組立無し)"],
        ]}
      />
      <Dialog
        title="計画区分"
        col="計画区"
        count={3}
        active
        place="top-[366px] left-[665px]"
        textCol="w-[91px]"
        rows={[
          ["1", "正味所要量計画"],
          ["2", "総所要量計画"],
          ["3", "単一品目計画"],
        ]}
      />

      <div className="pointer-events-none absolute right-4 bottom-1.5 font-['Noto_Sans_CJK_SC','Noto_Sans_CJK_JP',sans-serif] text-[19px] leading-6 text-[#86817c]/80 [font-feature-settings:normal] [text-shadow:1px_1px_0_rgba(255,255,255,0.5)]">
        CSDN @东京老树根
      </div>
    </div>
  );
}
